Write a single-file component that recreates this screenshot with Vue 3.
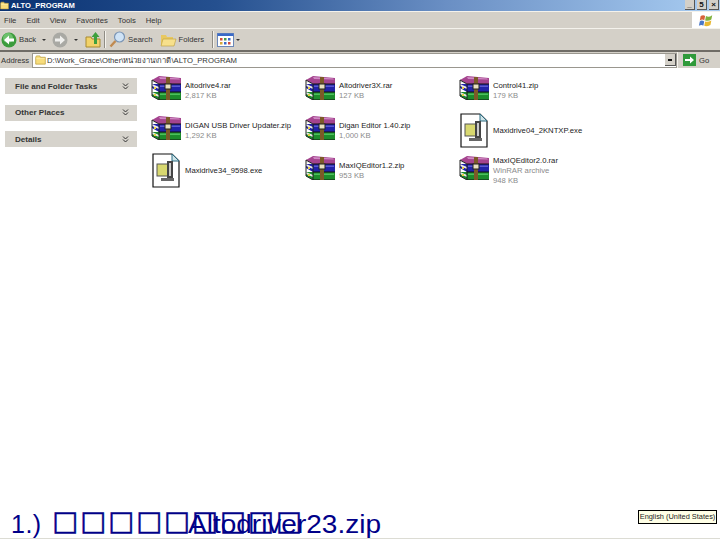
<template>
  <div class="page">
    <svg class="defs" width="0" height="0">
      <symbol id="rar" viewBox="0 0 30 24">
        <path d="M8 0 L30 2 L30 8 L8 8 L1 4 Z" fill="#a5448f"/>
        <path d="M8 1 L28 2.5 L29 3.5 L9 3 Z" fill="#d08ac4"/>
        <path d="M1 4 L8 8 L8 9 L1 6 Z" fill="#e8e8e8"/>
        <path d="M8 8 L30 8 L30 16 L8 16 L1 12 L1 8 Z" fill="#2222a8"/>
        <path d="M9 9.5 L29 9.5 L29 11 L9 11 Z" fill="#5a5ad0"/>
        <path d="M1 8 L8 11 L8 13 L1 10 Z" fill="#ececec"/>
        <path d="M8 16 L30 16 L30 24 L8 24 L1 20 L1 16 Z" fill="#1c8c2c"/>
        <path d="M9 17.5 L29 17.5 L29 19 L9 19 Z" fill="#4cc05c"/>
        <path d="M1 16 L8 19 L8 21 L1 18 Z" fill="#ececec"/>
        <path d="M1 4 L8 8 L8 24 L1 20 Z" fill="none" stroke="#222" stroke-width="1"/>
        <path d="M8 8 H30 M8 16 H30 M8 24 H30" stroke="#111" stroke-width="1" fill="none"/>
        <rect x="15" y="1" width="4" height="23" fill="#7c5a28"/>
        <rect x="14" y="8" width="6" height="5" fill="#e8e0c0" stroke="#222" stroke-width="1"/>
        <rect x="3" y="11" width="2" height="2" fill="#e8d040"/>
        <rect x="3" y="18" width="2" height="2" fill="#e8d040"/>
      </symbol>
      <symbol id="exe" viewBox="0 0 28 35">
        <path d="M1 1 H20 L27 8 V34 H1 Z" fill="#fff" stroke="#111" stroke-width="1.2"/>
        <path d="M20 1 V8 H27 Z" fill="#cfe4e8" stroke="#2a6a80" stroke-width="1"/>
        <rect x="5" y="11" width="12" height="12" fill="#d8d870" stroke="#555" stroke-width="1"/>
        <rect x="15" y="8" width="6" height="17" fill="#444"/>
        <rect x="17" y="10" width="2" height="13" fill="#ccc"/>
        <path d="M9 25 H22 V28 H9 Z" fill="#666"/>
      </symbol>
      <symbol id="folder" viewBox="0 0 16 14">
        <path d="M1 3 L2 1 H7 L8 3 H15 V13 H1 Z" fill="#f7dc7a" stroke="#b89a3a" stroke-width="1"/>
        <path d="M2 5 H14" stroke="#fff3b8" stroke-width="1"/>
      </symbol>
    </svg>

    <div class="titlebar">
      <div class="title">
        <svg class="title-icon"><use href="#folder"/></svg>
        ALTO_PROGRAM
      </div>
      <div class="controls">
        <span class="ctl">_</span>
        <span class="ctl">5</span>
        <span class="ctl">×</span>
      </div>
    </div>

    <div class="menubar">
      <div class="menus">
        <span v-for="m in menus" :key="m">{{ m }}</span>
      </div>
      <div class="flag">
        <svg width="16" height="13" viewBox="0 0 18 14">
          <path d="M3 2 Q6 0 8 2 L7 7 Q5 5 2 7 Z" fill="#d8623a"/>
          <path d="M9 2 Q12 4 16 1 L15 6 Q12 8 8 7 Z" fill="#7fb13c"/>
          <path d="M2 8 Q4 6 7 8 L6 13 Q4 11 1 13 Z" fill="#4a78c8"/>
          <path d="M8 8 Q11 9 15 7 L14 12 Q10 14 7 13 Z" fill="#e8b830"/>
        </svg>
      </div>
    </div>

    <div class="toolbar">
      <svg width="16" height="16" viewBox="0 0 16 16">
        <circle cx="8" cy="8" r="7.5" fill="#3c9c3c"/>
        <circle cx="7" cy="6" r="5" fill="#6cc06c"/>
        <path d="M3 8 L8 3.5 V6.5 H13 V9.5 H8 V12.5 Z" fill="#fff"/>
      </svg>
      <span class="tb-label back-label">Back</span>
      <span class="caret back-caret"></span>
      <svg class="forward" width="16" height="16" viewBox="0 0 16 16">
        <circle cx="8" cy="8" r="7.5" fill="#a9a9a4"/>
        <path d="M13 8 L8 3.5 V6.5 H3 V9.5 H8 V12.5 Z" fill="#f0f0ee"/>
      </svg>
      <span class="caret fwd-caret"></span>
      <svg class="up" width="17" height="17" viewBox="0 0 17 17">
        <path d="M1 6 H6 L7 8 H15 V16 H1 Z" fill="#f2d268" stroke="#a88a30"/>
        <path d="M9 13 V6 H6.5 L10.5 1 L14.5 6 H12 V13 Z" fill="#3ea03e"/>
      </svg>
      <span class="sep sep-a"></span>
      <svg class="search" width="17" height="17" viewBox="0 0 17 17">
        <circle cx="10.5" cy="6" r="5" fill="#cfe3f6" stroke="#7a95b5" stroke-width="1.2"/>
        <path d="M6.5 10 L1.5 15.5" stroke="#c08a50" stroke-width="2.4"/>
      </svg>
      <span class="tb-label search-label">Search</span>
      <svg class="folders" width="17" height="15" viewBox="0 0 17 15">
        <path d="M1 3 H6 L7 5 H13 V13 H1 Z" fill="#e8c860"/>
        <path d="M3 7 H16 L14 14 H1 Z" fill="#f7e08c" stroke="#b89a3a" stroke-width=".6"/>
      </svg>
      <span class="tb-label">Folders</span>
      <span class="sep sep-b"></span>
      <svg class="views" width="17" height="14" viewBox="0 0 17 14">
        <rect x=".5" y=".5" width="16" height="13" fill="#fff" stroke="#6c88b8"/>
        <rect x=".5" y=".5" width="16" height="2.5" fill="#3a6ac8"/>
        <rect x="3" y="5" width="2.5" height="2.5" fill="#d04a3a"/>
        <rect x="7" y="5" width="2.5" height="2.5" fill="#4a9a4a"/>
        <rect x="11" y="5" width="2.5" height="2.5" fill="#3a6ac8"/>
        <rect x="3" y="9" width="2.5" height="2.5" fill="#d8a838"/>
        <rect x="7" y="9" width="2.5" height="2.5" fill="#3a6ac8"/>
        <rect x="11" y="9" width="2.5" height="2.5" fill="#d04a3a"/>
      </svg>
      <span class="caret views-caret"></span>
    </div>

    <div class="addressbar">
      <span class="addr-label">Address</span>
      <div class="addr-field">
        <svg class="addr-folder"><use href="#folder"/></svg>
        <span class="addr-text">D:\Work_Grace\Other\หน่วยงาน\กาดี\ALTO_PROGRAM</span>
        <span class="addr-drop"></span>
      </div>
      <div class="go">
        <svg width="13" height="12" viewBox="0 0 13 12">
          <rect width="13" height="12" fill="#2f9a3a"/>
          <path d="M2 5 H7 V2.5 L11 6 L7 9.5 V7 H2 Z" fill="#fff"/>
        </svg>
        <span>Go</span>
      </div>
    </div>

    <div class="main">
      <aside class="side">
        <div v-for="p in panels" :key="p" class="panel">
          <span>{{ p }}</span>
          <svg width="7" height="7" viewBox="0 0 7 7">
            <path d="M1 0.5 L3.5 3 L6 0.5 M1 3.5 L3.5 6 L6 3.5" fill="none" stroke="#333" stroke-width="1"/>
          </svg>
        </div>
      </aside>
      <div class="files">
        <div v-for="f in files" :key="f.name" class="tile">
          <svg :class="f.icon === 'rar' ? 'ic-rar' : 'ic-exe'"><use :href="'#' + f.icon"/></svg>
          <div class="tile-text">
            <div class="fname">{{ f.name }}</div>
            <div v-for="d in f.info" :key="d" class="finfo">{{ d }}</div>
          </div>
        </div>
      </div>
    </div>

    <div class="slide-foot">
      <span class="foot-num">1.)</span>
      <span class="foot-boxes">□□□□□□□□□</span>
      <span class="foot-name">Altodriver23.zip</span>
      <div class="lang-tip">English (United States)</div>
    </div>
  </div>
</template>

<script setup>
const menus = ['File', 'Edit', 'View', 'Favorites', 'Tools', 'Help']
const panels = ['File and Folder Tasks', 'Other Places', 'Details']

const files = [
  { name: 'Altodrive4.rar', info: ['2,817 KB'], icon: 'rar' },
  { name: 'Altodriver3X.rar', info: ['127 KB'], icon: 'rar' },
  { name: 'Control41.zip', info: ['179 KB'], icon: 'rar' },
  { name: 'DIGAN USB Driver Updater.zip', info: ['1,292 KB'], icon: 'rar' },
  { name: 'Digan Editor 1.40.zip', info: ['1,000 KB'], icon: 'rar' },
  { name: 'Maxidrive04_2KNTXP.exe', info: [], icon: 'exe' },
  { name: 'Maxidrive34_9598.exe', info: [], icon: 'exe' },
  { name: 'MaxIQEditor1.2.zip', info: ['953 KB'], icon: 'rar' },
  { name: 'MaxIQEditor2.0.rar', info: ['WinRAR archive', '948 KB'], icon: 'rar' }
]
</script>

<style>
html, body { margin: 0; background: #fff; }
</style>

<style scoped>
.page {
  width: 720px;
  height: 540px;
  overflow: hidden;
  display: flex;
  flex-direction: column;
  font-family: "Liberation Sans", Arial, sans-serif;
  font-size: 7.7px;
  color: #222;
  background: #fff;
}

.defs { position: absolute; }

.titlebar {
  height: 11px;
  flex: none;
  display: flex;
  justify-content: space-between;
  align-items: center;
  background: linear-gradient(90deg, #0a3272 0%, #25508f 30%, #6a8fc4 62%, #a9cdf2 100%);
  color: #fff;
  font-weight: bold;
}
.title { display: flex; align-items: center; gap: 2px; font-size: 7.6px; }
.title-icon { width: 9px; height: 9px; }
.controls { display: flex; gap: 2px; padding-right: 1px; align-items: center; }
.ctl {
  width: 10px;
  height: 10px;
  background: #d4d0c8;
  color: #111;
  font-size: 8px;
  line-height: 9px;
  text-align: center;
  border-right: 1px solid #555;
  border-bottom: 1px solid #555;
  box-sizing: border-box;
  margin-top: -1px;
}

.menubar {
  height: 16px;
  flex: none;
  display: flex;
  justify-content: space-between;
  background: #d4d0c8;
  border-top: 1px solid #f4f2ec;
  border-bottom: 1px solid #f4f2ec;
}
.menus { display: flex; gap: 10px; align-items: center; padding-left: 4px; color: #333; }
.flag {
  width: 28px;
  background: #fff;
  display: flex;
  align-items: center;
  justify-content: center;
}

.toolbar {
  height: 21px;
  flex: none;
  display: flex;
  align-items: center;
  background: #d4d0c8;
  padding-left: 1px;
  color: #333;
}
.tb-label { margin-left: 1px; }
.back-label { margin-left: 2px; }
.search-label { margin-left: 2px; }
.caret {
  width: 0;
  height: 0;
  border-left: 2px solid transparent;
  border-right: 2px solid transparent;
  border-top: 2px solid #333;
}
.back-caret { margin-left: 6px; }
.forward { margin-left: 6px; }
.fwd-caret { margin-left: 6px; }
.up { margin-left: 7px; }
.sep { width: 1px; height: 17px; background: #f5f3ee; border-left: 1px solid #8f8c84; }
.sep-a { margin-left: 2px; }
.search { margin-left: 3px; }
.folders { margin-left: 8px; }
.sep-b { margin-left: 8px; }
.views { margin-left: 3px; }
.views-caret { margin-left: 2px; }

.addressbar {
  height: 16px;
  flex: none;
  display: flex;
  align-items: center;
  background: #d4d0c8;
  border-top: 2px solid #6f6c66;
  color: #333;
}
.addr-label { width: 32px; padding-left: 1px; box-sizing: border-box; }
.addr-field {
  width: 645px;
  height: 15px;
  box-sizing: border-box;
  background: #fff;
  border: 1px solid #9a978f;
  display: flex;
  align-items: center;
}
.addr-folder { width: 11px; height: 10px; margin-left: 2px; }
.addr-text { margin-left: 1px; flex: 1; font-size: 7.7px; white-space: nowrap; }
.addr-drop {
  width: 11px;
  height: 12px;
  background: #d4d0c8 linear-gradient(#111, #111) center / 4px 2px no-repeat;
  border-right: 1px solid #555;
  border-bottom: 1px solid #555;
  box-sizing: border-box;
}
.go {
  flex: 1;
  display: flex;
  align-items: center;
  gap: 3px;
  padding-left: 5px;
  border-left: 1px solid #f5f3ee;
  height: 100%;
}

.main { flex: 1; display: flex; min-height: 0; }

.side {
  width: 132px;
  margin-left: 5px;
  padding-top: 10px;
  display: flex;
  flex-direction: column;
  gap: 10.5px;
  flex: none;
}
.panel {
  height: 16px;
  flex: none;
  display: flex;
  align-items: center;
  justify-content: space-between;
  background: #d6d3cc;
  padding: 0 8px 0 10px;
  font-size: 8.1px;
  font-weight: bold;
  color: #333;
}

.files {
  margin-left: 14px;
  display: grid;
  grid-template-columns: repeat(3, 154px);
  grid-auto-rows: 40px;
  align-content: start;
}
.tile { display: flex; align-items: center; gap: 4px; height: 40px; }
.ic-rar { width: 30px; height: 24px; flex: none; }
.ic-exe { width: 28px; height: 35px; flex: none; margin: 4px 1px 0; }
.tile-text { line-height: 10px; white-space: nowrap; margin-top: 6px; }
.fname { color: #222; }
.finfo { color: #8b8b8b; }

.slide-foot {
  height: 30px;
  flex: none;
  position: relative;
  display: flex;
  align-items: flex-end;
  margin-bottom: 1px;
  padding-left: 11px;
  box-sizing: border-box;
  border-bottom: 1px solid #dcdcd4;
  color: #000088;
  font-size: 25px;
  line-height: 28px;
  white-space: nowrap;
}
.foot-num { letter-spacing: .5px; }
.foot-boxes {
  font-family: "DejaVu Sans", sans-serif;
  font-size: 27.5px;
  margin-left: 10.5px;
  margin-bottom: 4px;
  letter-spacing: 2px;
  -webkit-text-stroke: .5px #000088;
}
.foot-name {
  position: absolute;
  left: 188px;
  bottom: 0;
  transform: scaleX(1.12);
  transform-origin: left;
}
.lang-tip {
  position: absolute;
  right: 3px;
  top: 1px;
  width: 79px;
  height: 14px;
  box-sizing: border-box;
  border: 1px solid #000;
  background: #ffffe6;
  color: #222;
  font-size: 7.4px;
  line-height: 12px;
  text-align: center;
}
</style>
